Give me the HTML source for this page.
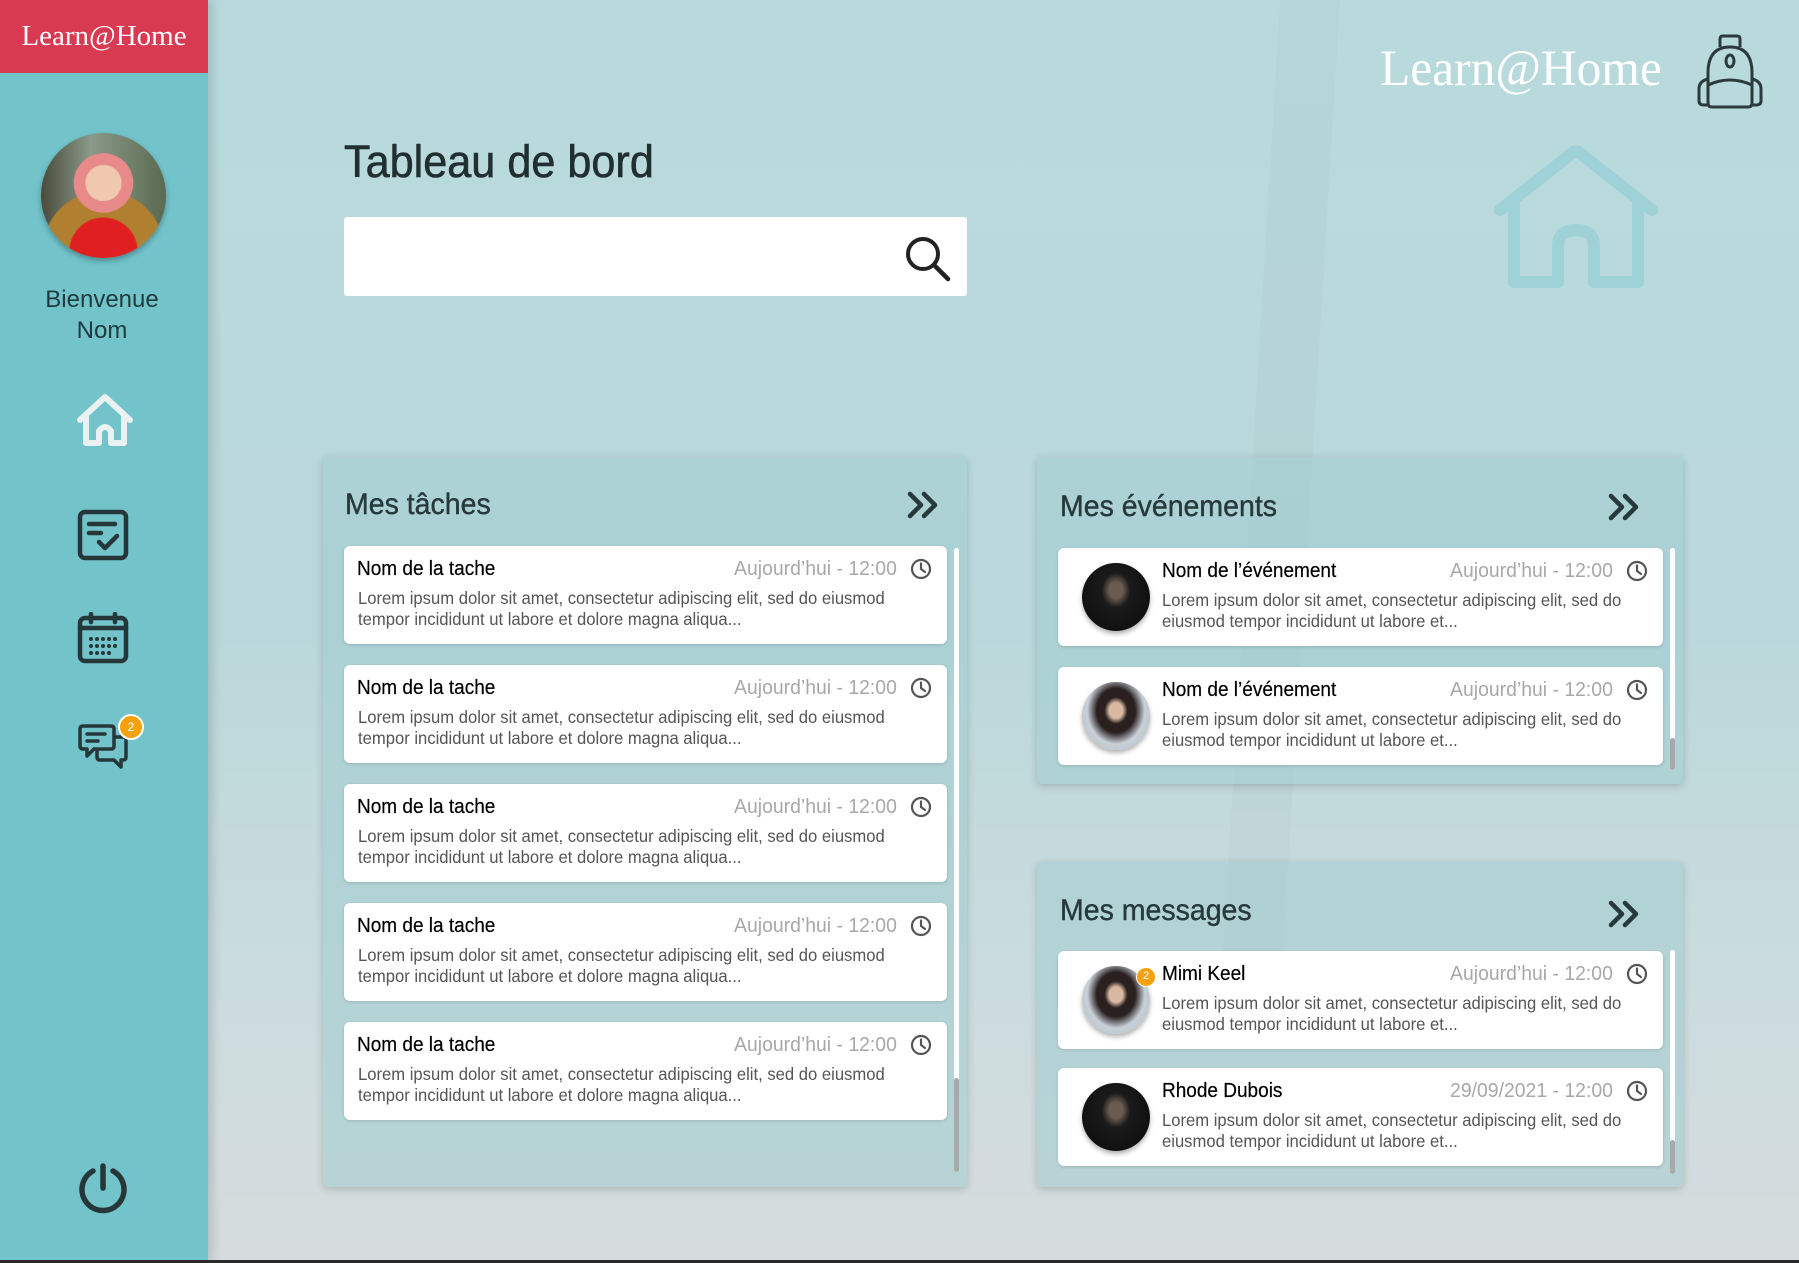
<!DOCTYPE html>
<html><head><meta charset="utf-8"><style>
*{margin:0;padding:0;box-sizing:border-box}
body{width:1799px;height:1263px;overflow:hidden;font-family:"Liberation Sans",sans-serif;background:linear-gradient(180deg,#b9dadd 0%,#bad8db 50%,#ccdcde 80%,#d6dcdd 100%);position:relative}
.side{position:absolute;left:0;top:0;width:208px;height:1263px;background:#72c3ca;box-shadow:4px 0 10px rgba(0,0,0,.15)}
.brand{position:absolute;left:0;top:0;width:208px;height:73px;background:#d83a52;color:#fff;font-family:"Liberation Serif",serif;font-size:29px;text-align:center;line-height:73px}
.ava{position:absolute;border-radius:50%}
.welcome{position:absolute;left:0;top:284px;width:204px;text-align:center;font-size:24px;line-height:31px;color:#1f3b3f}
.abs{position:absolute}
.title{position:absolute;left:344px;top:136px;font-size:45px;color:#222f31;transform:scaleX(.96);transform-origin:left;-webkit-text-stroke:.6px #222f31}
.search{position:absolute;left:344px;top:217px;width:623px;height:79px;background:#fff;border-radius:3px}
.panel{position:absolute;background:rgba(160,204,208,.55);border-radius:4px;box-shadow:0 2px 8px rgba(0,0,0,.18)}
.ph{position:absolute;font-size:30px;color:#27393b;transform:scaleX(.95);transform-origin:left;-webkit-text-stroke:.4px #27393b}
.card{position:absolute;background:#fff;border-radius:6px;box-shadow:0 1px 3px rgba(0,0,0,.15)}
.ct{position:absolute;top:12px;font-size:20px;color:#000;white-space:nowrap;transform:scaleX(.95);transform-origin:left;-webkit-text-stroke:.2px #000}
.cd{position:absolute;top:12px;font-size:20px;color:#a8a8a8;white-space:nowrap;transform:scaleX(.97);transform-origin:right}
.cb{position:absolute;top:42px;font-size:17.5px;line-height:20.5px;color:#555;white-space:nowrap;transform:scaleX(.95);transform-origin:left}
.clk{position:absolute;top:12px}
.sb{position:absolute;width:5px;border-radius:3px;background:#fff}
.sb i{position:absolute;left:0;width:5px;border-radius:3px;background:#a9a9a9}
.bottom{position:absolute;left:0;top:1260px;width:1799px;height:3px;background:#2a2a2a}
</style></head><body>
<svg class="abs" style="left:520px;top:0" width="1279" height="1260" opacity=".025"><path d="M820 0 L760 1000 L720 1050 L700 1000 L760 0Z" fill="#333"/></svg>
<div class="side">
<div class="brand">Learn@Home</div>
<div class="ava" style="left:41px;top:133px;width:125px;height:125px;background:radial-gradient(circle at 50% 40%,#f0c8b0 0 18%,#e88a8a 19% 30%,transparent 31%),radial-gradient(circle at 50% 95%,#e02020 0 25%,#b08030 26% 45%,transparent 46%),linear-gradient(90deg,#4a4a3a,#8a9a8a 40%,#5a6a50);box-shadow:0 3px 6px rgba(0,0,0,.3)"></div>
<div class="welcome">Bienvenue<br>Nom</div>
<svg class="abs" style="left:76px;top:393px" width="58" height="56" viewBox="0 0 58 56"><path d="M4 27 L29 4 L54 27 M10 22 V50 H23 V38 Q29 30 35 38 V50 H48 V22" fill="none" stroke="#eaf1f1" stroke-width="6" stroke-linecap="round" stroke-linejoin="round"/></svg>
<svg class="abs" style="left:77px;top:509px" width="52" height="52" viewBox="0 0 52 52"><rect x="3" y="3" width="46" height="46" rx="5" fill="none" stroke="#253739" stroke-width="4.5"/><path d="M12 15 H38 M12 24 H24 M22 33 L28 39 L40 27" fill="none" stroke="#253739" stroke-width="4.5" stroke-linecap="round" stroke-linejoin="round"/></svg>
<svg class="abs" style="left:77px;top:612px" width="52" height="52" viewBox="0 0 52 52"><rect x="3" y="6" width="46" height="43" rx="5" fill="none" stroke="#253739" stroke-width="4.5"/><path d="M3 16 H49 M14 2 V10 M38 2 V10" stroke="#253739" stroke-width="4.5" stroke-linecap="round"/><g fill="#253739"><circle cx="14" cy="27" r="2"/><circle cx="20" cy="27" r="2"/><circle cx="26" cy="27" r="2"/><circle cx="32" cy="27" r="2"/><circle cx="38" cy="27" r="2"/><circle cx="14" cy="34" r="2"/><circle cx="20" cy="34" r="2"/><circle cx="26" cy="34" r="2"/><circle cx="32" cy="34" r="2"/><circle cx="38" cy="34" r="2"/><circle cx="14" cy="41" r="2"/><circle cx="20" cy="41" r="2"/><circle cx="26" cy="41" r="2"/><circle cx="32" cy="41" r="2"/></g></svg>
<svg class="abs" style="left:78px;top:722px" width="52" height="50" viewBox="0 0 52 50"><path d="M5 4 H33 Q36 4 36 7 V24 Q36 27 33 27 H16 L9 34 V27 H5 Q2 27 2 24 V7 Q2 4 5 4Z" fill="none" stroke="#253739" stroke-width="3.5" stroke-linejoin="round"/><path d="M36 15 H45 Q48 15 48 18 V35 Q48 38 45 38 H43 V45 L36 38 H22 Q19 38 19 35 V27" fill="none" stroke="#253739" stroke-width="3.5" stroke-linejoin="round"/><path d="M9 12 H27 M9 19 H20" stroke="#253739" stroke-width="3.5" stroke-linecap="round"/></svg>
<div class="abs" style="left:118px;top:714px;width:26px;height:26px;border-radius:50%;background:#f5a20a;border:2px solid #fff;color:#fff;font-size:12px;text-align:center;line-height:22px">2</div>
<svg class="abs" style="left:76px;top:1162px" width="54" height="54" viewBox="0 0 54 54"><path d="M17 9 A21 21 0 1 0 37 9" fill="none" stroke="#253739" stroke-width="5.5" stroke-linecap="round"/><path d="M27 4 V26" stroke="#253739" stroke-width="5.5" stroke-linecap="round"/></svg>
</div>
<div class="abs" style="left:1380px;top:40px;font-family:'Liberation Serif',serif;font-size:51px;color:#fff;transform:scaleX(.97);transform-origin:left">Learn@Home</div>
<svg class="abs" style="left:1694px;top:33px" width="72" height="78" viewBox="0 0 72 78"><path d="M26 14 V6 Q26 3 29 3 H43 Q46 3 46 6 V14" fill="none" stroke="#2d3a3b" stroke-width="3"/><path d="M14 40 Q14 14 36 14 Q58 14 58 40 V70 Q58 74 54 74 H18 Q14 74 14 70Z" fill="none" stroke="#2d3a3b" stroke-width="3"/><path d="M14 52 Q36 42 58 52" fill="none" stroke="#2d3a3b" stroke-width="3"/><ellipse cx="36" cy="28" rx="4" ry="6" fill="none" stroke="#2d3a3b" stroke-width="3"/><path d="M14 46 Q5 48 5 56 V68 Q5 72 10 72 H14 M58 46 Q67 48 67 56 V68 Q67 72 62 72 H58" fill="none" stroke="#2d3a3b" stroke-width="3"/></svg>
<svg class="abs" style="left:1490px;top:146px" width="172" height="146" viewBox="0 0 172 146"><path d="M10 64 L86 4 L162 64" fill="none" stroke="#9ed2d8" stroke-width="12" stroke-linecap="round" stroke-linejoin="round"/><path d="M24 52 V136 H68 V100 Q68 84 86 84 Q104 84 104 100 V136 H148 V52" fill="none" stroke="#9ed2d8" stroke-width="12" stroke-linejoin="round"/></svg>
<div class="title">Tableau de bord</div>
<div class="search"><svg class="abs" style="left:560px;top:18px" width="48" height="48" viewBox="0 0 48 48"><circle cx="19" cy="19" r="15" fill="none" stroke="#222" stroke-width="4"/><path d="M30 30 L44 44" stroke="#222" stroke-width="4.5" stroke-linecap="round"/></svg></div>

<div class="panel" style="left:323px;top:457px;width:644px;height:730px"></div>
<div class="ph" style="left:345px;top:488px">Mes tâches</div>
<svg class="abs" style="left:906px;top:490px" width="34" height="30" viewBox="0 0 34 30"><path d="M4 4 L15 15 L4 26 M18 4 L29 15 L18 26" fill="none" stroke="#27393b" stroke-width="4.5" stroke-linecap="round" stroke-linejoin="round"/></svg>
<div class="sb" style="left:954px;top:548px;height:624px"><i style="top:530px;height:94px"></i></div>

<div class="panel" style="left:1037px;top:457px;width:646px;height:327px"></div>
<div class="ph" style="left:1060px;top:490px">Mes événements</div>
<svg class="abs" style="left:1607px;top:492px" width="34" height="30" viewBox="0 0 34 30"><path d="M4 4 L15 15 L4 26 M18 4 L29 15 L18 26" fill="none" stroke="#27393b" stroke-width="4.5" stroke-linecap="round" stroke-linejoin="round"/></svg>
<div class="sb" style="left:1670px;top:548px;height:222px"><i style="top:190px;height:32px"></i></div>

<div class="panel" style="left:1037px;top:862px;width:646px;height:325px"></div>
<div class="ph" style="left:1060px;top:894px">Mes messages</div>
<svg class="abs" style="left:1607px;top:899px" width="34" height="30" viewBox="0 0 34 30"><path d="M4 4 L15 15 L4 26 M18 4 L29 15 L18 26" fill="none" stroke="#27393b" stroke-width="4.5" stroke-linecap="round" stroke-linejoin="round"/></svg>
<div class="sb" style="left:1670px;top:950px;height:224px"><i style="top:190px;height:34px"></i></div>

<div id="cards"></div>
<div class="bottom"></div>
<script>
var clock='<svg width="22" height="22" viewBox="0 0 22 22"><circle cx="11" cy="11" r="9" fill="none" stroke="#555" stroke-width="2.2"/><path d="M11 5.5 V11 L15 14" fill="none" stroke="#555" stroke-width="2.2" stroke-linecap="round"/></svg>';
var h='';
var tasks=[546,665,784,903,1022];
var tb1='Lorem ipsum dolor sit amet, consectetur adipiscing elit, sed do eiusmod',tb2='tempor incididunt ut labore et dolore magna aliqua...';
tasks.forEach(function(y){
h+='<div class="card" style="left:344px;top:'+y+'px;width:603px;height:98px"><div class="ct" style="left:13px">Nom de la tache</div><div class="cd" style="right:50px">Aujourd’hui - 12:00</div><div class="clk" style="left:566px">'+clock+'</div><div class="cb" style="left:14px">'+tb1+'<br>'+tb2+'</div></div>';
});
var eb1='Lorem ipsum dolor sit amet, consectetur adipiscing elit, sed do',eb2='eiusmod tempor incididunt ut labore et...';
var dark='radial-gradient(ellipse at 50% 40%,#6a5a50 0 14%,#1a1a1a 30%,#0a0a0a)';
var light='radial-gradient(ellipse at 50% 42%,#d8b8a0 0 14%,#2a2020 24% 40%,#c8d0d8 60%,#aab4bc)';
var ev=[[548,'Nom de l’événement','Aujourd’hui - 12:00',dark,0],[667,'Nom de l’événement','Aujourd’hui - 12:00',light,0],[951,'Mimi Keel','Aujourd’hui - 12:00',light,1],[1068,'Rhode Dubois','29/09/2021 - 12:00',dark,0]];
ev.forEach(function(e){
h+='<div class="card" style="left:1058px;top:'+e[0]+'px;width:605px;height:98px"><div class="ava" style="left:24px;top:15px;width:68px;height:68px;background:'+e[3]+';box-shadow:0 3px 5px rgba(0,0,0,.3)"></div>'+(e[4]?'<div class="abs" style="left:78px;top:16px;width:20px;height:20px;border-radius:50%;background:#f5a20a;border:1.5px solid #fff;color:#fff;font-size:11px;text-align:center;line-height:17px">2</div>':'')+'<div class="ct" style="left:104px">'+e[1]+'</div><div class="cd" style="right:50px">'+e[2]+'</div><div class="clk" style="left:568px">'+clock+'</div><div class="cb" style="left:104px">'+eb1+'<br>'+eb2+'</div></div>';
});
document.getElementById('cards').innerHTML=h;
</script>
</body></html>
